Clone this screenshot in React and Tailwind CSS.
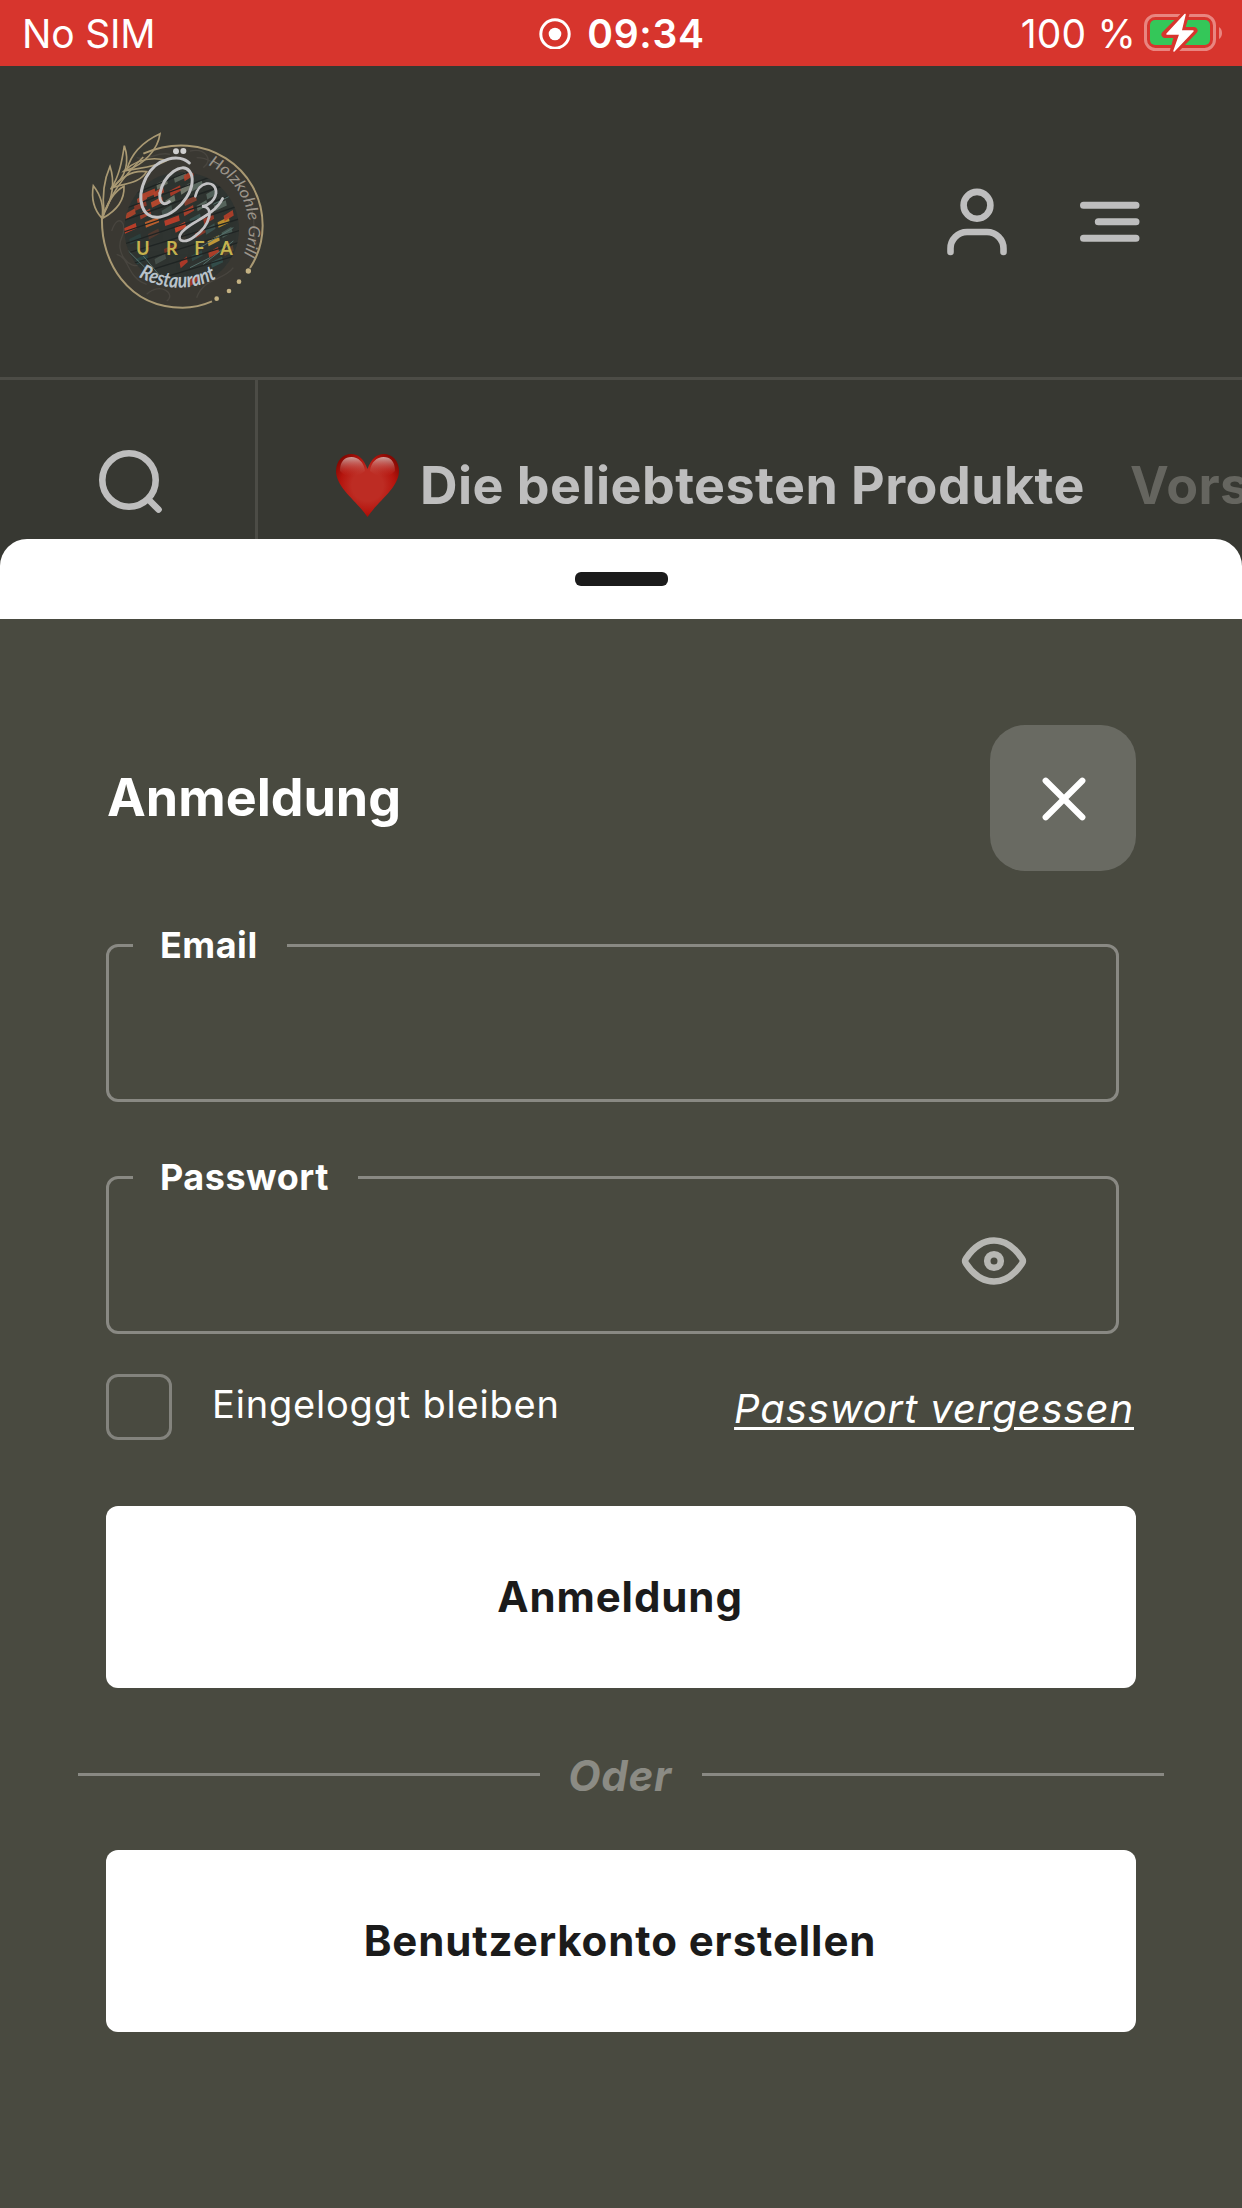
import { useState } from 'react';

const EMBERS = [
  [205, 215, 34, '#b8452d'], [245, 185, 26, '#6c7365'], [300, 165, 30, '#5f6a60'], [325, 160, 22, '#b3402a'],
  [180, 250, 30, '#8d3a2b'], [230, 240, 28, '#c24b2f'], [285, 205, 26, '#b33c2a'], [350, 190, 26, '#5f6d64'],
  [150, 275, 24, '#b3452c'], [215, 300, 34, '#c9642f'], [275, 295, 38, '#c4402c'], [260, 265, 24, '#46544f'],
  [330, 235, 30, '#8a4030'], [395, 215, 26, '#56655f'], [420, 250, 30, '#5b6a62'], [150, 318, 30, '#c8402a'],
  [300, 315, 26, '#d0452c'], [345, 290, 26, '#3d5856'], [385, 290, 24, '#a13a2a'], [430, 300, 28, '#c7962f'],
  [445, 280, 22, '#b5402b'], [165, 350, 28, '#2d4241'], [220, 335, 26, '#54392f'], [400, 355, 28, '#cfa23a'],
  [400, 390, 24, '#b8412b'], [440, 330, 24, '#4a5e58'], [270, 380, 30, '#7a3226'], [185, 410, 28, '#2c4545'],
  [240, 410, 26, '#49534e'], [310, 420, 16, '#b83a2a'], [350, 400, 26, '#324a49'], [410, 420, 28, '#35504e'],
  [445, 385, 22, '#55402f'], [340, 475, 18, '#a83a2c'], [300, 350, 26, '#3c3a33'], [360, 330, 24, '#8e3a2a'],
  [235, 210, 24, '#b5442e'], [270, 235, 22, '#6f7a6d'], [315, 200, 22, '#7a8073'], [195, 275, 26, '#a8402c'],
  [325, 265, 24, '#b0402c'], [365, 250, 24, '#5d6b62'], [390, 320, 22, '#3e5552'], [185, 230, 22, '#b0452f'],
];

const LEAVES = [
  'M66 292 C38 262 34 228 40 194 C62 222 72 256 66 292Z',
  'M72 275 C66 222 74 172 90 136 C104 178 100 232 72 275Z',
  'M68 292 C82 246 100 212 132 196 C134 236 112 268 68 292Z',
  'M92 205 C118 166 126 120 133 74 C148 118 142 168 92 205Z',
  'M98 200 C126 166 160 146 200 152 C178 188 138 186 98 200Z',
  'M140 148 C152 100 188 62 240 38 C234 86 192 130 140 148Z',
  'M132 150 C166 118 210 106 262 118 C220 142 176 140 132 150Z',
];

function RestaurantLogo() {
  return (
    <svg className="h-[200px] w-[210px] shrink-0" viewBox="0 0 630 600" role="img" aria-label="Öz Urfa Restaurant">
      <defs>
        <clipPath id="grill">
          <circle cx="305" cy="325" r="172" />
        </clipPath>
        <path id="ringText" d="M384 132 A208 208 0 0 1 476 430" />
        <path id="baseText" d="M176 468 Q300 534 426 464" />
      </defs>
      <circle cx="307" cy="314" r="242" fill="#3a3832" />
      <g fill="none" stroke="#48453f" strokeWidth="4">
        <path d="M95 330c20-60 50-20 30 20s20 100 60 80M110 400c40 10 30 70 90 90M330 90c50-10 70 30 40 50M350 110c60 0 90 60 130 70" />
        <path d="M200 520c40-40 90 0 60 20M350 530c20-60 80-50 110-90M490 220c50 60 20 100 40 150M170 110c40 10 60-20 100-10" />
      </g>
      <g clipPath="url(#grill)">
        <rect x="130" y="150" width="350" height="350" fill="#2f3431" />
        {EMBERS.map(([x, y, w, color]) => (
          <path
            key={`${x}-${y}`}
            d={`M${x - w / 2} ${y + 6}l${w} -14l2 10l-${w} 14z`}
            fill={color}
            stroke={color}
            strokeWidth="6"
            opacity="0.9"
          />
        ))}
        <g stroke="#1f2423" strokeWidth="4">
          <path d="M120 235 380 130M120 268 440 150M125 300 470 180M125 335 480 215M130 370 490 250M130 400 490 290M150 430 490 325M170 460 490 360M200 485 480 400" />
        </g>
        <g stroke="#55716c" strokeWidth="3">
          <path d="M140 385l60 60M190 405l50 60M360 380l100-60M370 430l90-70M150 410l30 45M400 250l60-30M330 440l60-30" />
        </g>
      </g>
      <g fill="none" stroke="#a99973" strokeWidth="6">
        <path d="M66 290 C62 420 142 560 308 560 Q352 560 396 541" />
        <path d="M190 98 C370 20 548 140 548 314 Q547 385 510 441" />
        <g strokeWidth="5">
          {LEAVES.map((d) => (
            <path key={d} d={d} />
          ))}
          <path d="M66 292C90 220 130 165 190 108" />
        </g>
      </g>
      <g fill="#c4b283">
        <circle cx="505" cy="450" r="8" />
        <circle cx="477" cy="482" r="7" />
        <circle cx="447" cy="510" r="7" />
        <circle cx="410" cy="533" r="7" />
      </g>
      <g fill="none" stroke="#c2c2c4" strokeLinecap="round">
        <path strokeWidth="9" d="M328 126C300 98 230 108 198 170C164 240 190 296 240 288C306 276 358 188 328 150C306 122 252 160 240 216" />
        <path strokeWidth="9" d="M240 216C236 244 252 256 268 242" />
        <path strokeWidth="8" d="M346 226C356 180 404 176 408 210C410 238 382 254 366 256C404 256 392 312 344 346C316 368 292 362 300 342C316 306 400 290 428 232" />
      </g>
      <circle cx="288" cy="91" r="9" fill="#cfcfcf" />
      <circle cx="310" cy="90" r="9" fill="#cfcfcf" />
      <text x="168" y="403" fill="#c4b24e" fontFamily="Lato, sans-serif" fontSize="55" fontWeight="700" textLength="290">
        URFA
      </text>
      <text fill="#b9c3cb" fontFamily="Lato, sans-serif" fontSize="62" fontStyle="italic" fontWeight="700">
        <textPath href="#baseText" textLength="244" lengthAdjust="spacingAndGlyphs">Restaurant</textPath>
      </text>
      <text fill="#9c958b" fontFamily="Lato, sans-serif" fontSize="48" fontStyle="italic">
        <textPath href="#ringText" textLength="320" lengthAdjust="spacingAndGlyphs">Holzkohle Grill</textPath>
      </text>
    </svg>
  );
}

function StatusBar() {
  return (
    <div className="grid h-[66px] grid-cols-3 items-center bg-[#d7352d] text-white">
      <div className="pt-px pl-[22px] text-[39px] leading-[65px] tracking-[-0.2px]">No SIM</div>
      <div className="flex items-center justify-center gap-4 pl-0.5">
        <svg className="size-8" viewBox="0 0 32 32" fill="none">
          <circle cx="16" cy="17" r="14.2" stroke="white" strokeWidth="3" />
          <circle cx="16" cy="17" r="6.3" fill="white" />
        </svg>
        <span className="text-[39px] leading-none font-semibold tracking-[0.7px]">09:34</span>
      </div>
      <div className="flex items-center justify-end gap-2 pr-[18px]">
        <span className="pt-px text-[39px] leading-[65px] tracking-[0.2px]">100 %</span>
        <svg className="h-10 w-20" viewBox="0 0 80 40">
          <rect x="1.5" y="2.5" width="69" height="34" rx="10" fill="none" stroke="#e98580" strokeWidth="3" />
          <path d="M75 14q3 2 3 6t-3 6z" fill="#e98580" />
          <rect x="6" y="7" width="60" height="25" rx="5" fill="#34c759" />
          <path d="M42 .5 21 21.500h13L29 39.500 50 17.500H37z" fill="white" stroke="#d7352d" strokeWidth="7" strokeLinejoin="round" />
          <path d="M41 1.500 23 21h13L30 38 49 18H37z" fill="white" stroke="white" strokeWidth="1.5" strokeLinejoin="round" />
        </svg>
      </div>
    </div>
  );
}

function HeaderIcons() {
  return (
    <div className="flex items-center gap-[58px] pt-px pr-[99px] text-[#bebebe]">
      <svg className="size-[72px]" viewBox="0 0 72 72" fill="none" stroke="currentColor" strokeWidth="6.6" strokeLinecap="round">
        <circle cx="36" cy="19.300" r="13.400" />
        <path d="M9.500 66v-3.500A16.500 16.500 0 0 1 26 46h20a16.500 16.500 0 0 1 16.500 16.500V66" />
      </svg>
      <svg className="size-[72px]" viewBox="0 0 72 72" fill="none" stroke="currentColor" strokeWidth="7" strokeLinecap="round">
        <path d="M12.500 19.300H65M27.300 35.800H65M12.500 52.300H65" />
      </svg>
    </div>
  );
}

function Heart() {
  return (
    <svg className="h-[63px] w-[63px] shrink-0" viewBox="0 0 63 63">
      <defs>
        <radialGradient id="heartFill" cx="0.5" cy="0.5" r="0.62">
          <stop offset="0.4" stopColor="#bd2c23" />
          <stop offset="0.7" stopColor="#b5140d" />
          <stop offset="1" stopColor="#7c0600" />
        </radialGradient>
        <linearGradient id="heartShine" x1="0" y1="0" x2="0" y2="1">
          <stop offset="0" stopColor="#cfaaa6" stopOpacity="0.95" />
          <stop offset="1" stopColor="#c03027" stopOpacity="0" />
        </linearGradient>
      </defs>
      <path d="M31.500 15C28 5 22 0 15.500 0 6.500 0 0 7 0 17c0 17 21 30 31.500 46C42 47 63 34 63 17 63 7 56.500 0 47.500 0 41 0 35 5 31.500 15Z" fill="url(#heartFill)" />
      <path d="M4 17C4 7 9 3 15.500 3S28 8 29 17c-8 7-18 8-25 0ZM59 17C59 7 54 3 47.500 3S35 8 34 17c8 7 18 8 25 0Z" fill="url(#heartShine)" />
    </svg>
  );
}

function CategoryBar() {
  return (
    <div className="flex h-[162px] overflow-hidden border-t-3 border-[#4c4c46]">
      <div className="w-[258px] shrink-0 border-r-3 border-[#4c4c46] pt-[69px] pl-[98px]">
        <svg className="size-[66px]" viewBox="0 0 66 66" fill="none" stroke="#bebebe" strokeWidth="6.600" strokeLinecap="round">
          <circle cx="31" cy="31" r="26.700" />
          <path d="m50.500 50.500 10 10" />
        </svg>
      </div>
      <div className="flex items-start pt-[74px] pl-[78px] text-[52px] leading-[63px] font-bold tracking-[0.45px] whitespace-nowrap">
        <Heart />
        <span className="pl-[21px] text-[#bebebe]">Die beliebtesten Produkte</span>
        <span className="pl-[45px] text-[#65655f]">Vorspeisen</span>
      </div>
    </div>
  );
}

function Field({ label, type, children }) {
  return (
    <fieldset className="h-[170px] w-[1013px] rounded-xl border-3 border-[#898983] pr-[89px] pl-6">
      <legend className="pr-[29px] pl-[27px] text-[36px] leading-[26px] font-bold tracking-[0.5px] text-white">{label}</legend>
      <div className="flex h-[141px] items-center">
        <input type={type} aria-label={label} className="min-w-0 flex-1 bg-transparent text-[40px] text-white outline-none" />
        {children}
      </div>
    </fieldset>
  );
}

function LoginSheet({ onClose }) {
  const [showPassword, setShowPassword] = useState(false);
  const [stayLoggedIn, setStayLoggedIn] = useState(false);

  return (
    <section className="flex-1 bg-[#494a40]">
      <div className="bg-[#373832]">
        <div className="flex h-20 justify-center rounded-t-[27px] bg-white pt-[33px]">
          <div className="h-3.5 w-[93px] rounded-md bg-[#1b1b1b]" />
        </div>
      </div>

      <div className="px-[106px] pt-[106px]">
        <div className="flex h-[146px] items-center justify-between">
          <h1 className="pb-0.5 pl-px text-[52px] leading-[63px] font-bold text-white">Anmeldung</h1>
          <button
            type="button"
            aria-label="Schließen"
            onClick={onClose}
            className="flex size-[146px] items-center justify-center rounded-[35px] bg-[#696a62]"
          >
            <svg className="mt-0.5 ml-0.5 size-11" viewBox="0 0 44 44" fill="none" stroke="white" strokeWidth="6.200" strokeLinecap="round">
              <path d="m3.700 3.700 36.600 36.600M40.300 3.700 3.700 40.300" />
            </svg>
          </button>
        </div>

        <div className="flex flex-col gap-[62px] pt-[61px]">
          <Field label="Email" type="email" />
          <Field label="Passwort" type={showPassword ? 'text' : 'password'}>
            <button type="button" aria-label="Passwort anzeigen" onClick={() => setShowPassword(!showPassword)}>
              <svg className="h-12 w-[66px]" viewBox="0 0 66 48" fill="none" stroke="#b7b7b3" strokeWidth="6.600" strokeLinejoin="round">
                <path d="M5 21.500C12 11 21 3.500 33 3.500S54 11 61 21.500q1.700 2.500 0 5C54 37 45 44.500 33 44.500S12 37 5 26.500q-1.700-2.500 0-5Z" />
                <circle cx="33" cy="24" r="6.800" />
              </svg>
            </button>
          </Field>
        </div>

        <div className="flex justify-between pt-10">
          <label className="flex">
            <input
              type="checkbox"
              checked={stayLoggedIn}
              onChange={(e) => setStayLoggedIn(e.target.checked)}
              className="size-[66px] appearance-none rounded-xl border-3 border-[#83837d] checked:bg-white"
            />
            <span className="pl-10 text-[38px] leading-[61px] tracking-[0.8px] text-white">Eingeloggt bleiben</span>
          </label>
          <a href="#" className="pr-0.5 text-[40px] leading-[70px] tracking-[0.9px] text-white italic underline decoration-3 underline-offset-4">
            Passwort vergessen
          </a>
        </div>

        <button type="button" className="mt-[62px] h-[182px] w-full rounded-xl bg-white pr-0.5 pb-0.5 text-[42px] font-bold tracking-[0.9px] text-[#1b1b1b]">
          Anmeldung
        </button>

        <div className="-mx-7 flex h-[162px] items-center pt-2.5 text-[42px] font-bold tracking-[0.7px] text-[#8b8b84] italic">
          <div className="h-[3px] flex-1 bg-[#898983]" />
          <span className="w-[162px] pt-0.5 pr-0.5 text-center">Oder</span>
          <div className="h-[3px] flex-1 bg-[#898983]" />
        </div>

        <button type="button" className="h-[182px] w-full rounded-xl bg-white pr-0.5 pb-0.5 text-[42px] font-bold tracking-[0.9px] text-[#1b1b1b]">
          Benutzerkonto erstellen
        </button>
      </div>
    </section>
  );
}

export default function App() {
  const [open, setOpen] = useState(true);

  return (
    <div className="flex h-[2208px] w-[1242px] flex-col overflow-hidden bg-[#373832] font-[Inter,sans-serif]">
      <StatusBar />
      <header className="flex h-[311px] items-center justify-between pl-20">
        <div className="pb-0.5">
          <RestaurantLogo />
        </div>
        <HeaderIcons />
      </header>
      <CategoryBar />
      {open && <LoginSheet onClose={() => setOpen(false)} />}
    </div>
  );
}
